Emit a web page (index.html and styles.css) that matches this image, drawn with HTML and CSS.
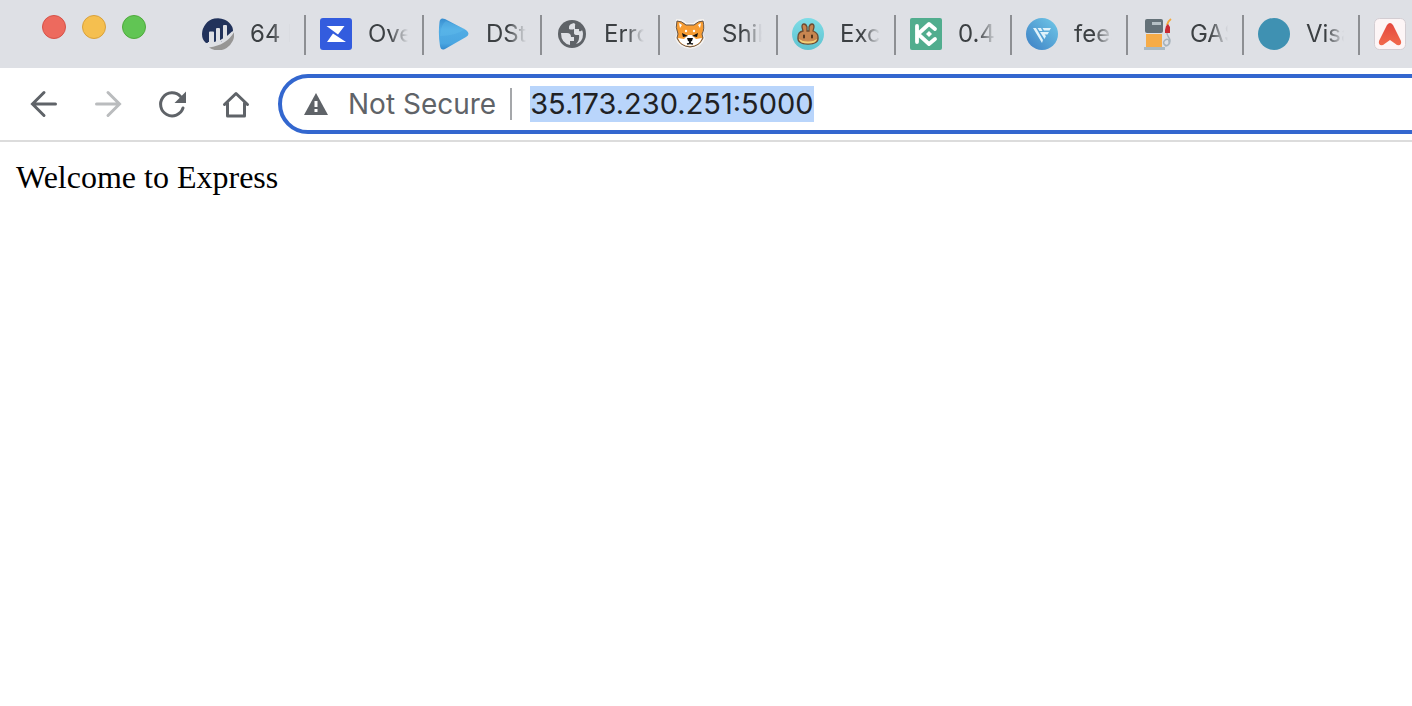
FILE: index.html
```html
<!DOCTYPE html>
<html lang="en">
<head>
<meta charset="utf-8">
<title>Welcome to Express</title>
<link rel="stylesheet" href="styles.css">
</head>
<body>
<header class="browser">
  <div class="tab-strip">
    <div class="window-controls">
      <button class="light close" aria-label="Close window"></button>
      <button class="light minimize" aria-label="Minimize window"></button>
      <button class="light zoom" aria-label="Zoom window"></button>
    </div>
    <nav class="tabs" aria-label="Open tabs">
      <button class="tab wide">
        <svg class="favicon" viewBox="0 0 32 32"><path fill="#21325b" d="M6 25H4Q0 22 0 16A16 16 0 0 1 30.300 9Q31 11 31 13Q27 19 20 22V24H6Z"/><path fill="#979695" d="M32 14A16 16 0 0 1 7 29.500Q25 27 32 14Z"/><path fill="#dee0e5" d="M7 14.500q0-1 1-1h3q1 0 1 1V25H7zM14 11q0-1 1-1h2q1 0 1 1v13h-4zM21 8q0-1 1-1h2q1 0 1 1v11l-4 3z"/><path d="M4 26Q20 26 31 14" fill="none" stroke="#dee0e5" stroke-width="2"/></svg>
        <span class="tab-title">64 E</span>
      </button>
      <button class="tab wide">
        <svg class="favicon" viewBox="0 0 32 32"><rect width="32" height="32" rx="3" fill="#335cde"/><path fill="#fff" d="M6.500 8H24.500L18 16.500zM7 24l6-8.500L26 24z"/></svg>
        <span class="tab-title">Over</span>
      </button>
      <button class="tab wide">
        <svg class="favicon" viewBox="0 0 32 32"><defs><linearGradient id="play" x1="0" y1="0" x2="0" y2="1"><stop offset="0" stop-color="#388ed0"/><stop offset=".35" stop-color="#51ade5"/><stop offset=".8" stop-color="#4aa6e1"/><stop offset="1" stop-color="#3489cc"/></linearGradient></defs><path fill="url(#play)" d="M1.500 4Q2-1 7 1L28 12Q33 16 28 19L7 31Q3 33 2 28Q0 16 1.500 4Z"/><path fill="#64c0ee" opacity=".35" d="M2 18Q18 18 27 11L8 3Q3 6 2 18Z"/></svg>
        <span class="tab-title">DSt</span>
      </button>
      <button class="tab wide">
        <svg class="favicon" viewBox="0 0 32 32"><circle cx="16" cy="16" r="14" fill="#5f6368"/><path fill="#dee0e5" d="M18 5q-5 1-5 4v2q3 1 5 0v4q0 2 3 2h2q1 5-3 9 7-2 7-10 0-2-1-4-1 2-3 1v-2h-4V8q1-2-1-3zM5 15h6q4 0 4 4h3v4h-4v4Q5 25 5 15z"/></svg>
        <span class="tab-title">Erro</span>
      </button>
      <button class="tab wide">
        <svg class="favicon" viewBox="0 0 32 32"><path d="M3 2q6 0 9 4h8q3-4 9-4q2 8-1 14l2 4q-3 9-14 10Q5 29 2 20l2-4Q1 9 3 2Z" fill="#f79c32" stroke="#f5f2ef" stroke-width="2"/><path d="M3 3q5 0 9 4h8q4-4 9-4q2 8-1 13l1 4q-3 8-13 9Q6 28 3 20l1-4Q1 9 3 3Z" fill="#f79c32" stroke="#62544a" stroke-width="1"/><path fill="#fff" d="M4 20l6 1 4-4h4l4 4 6-1q-3 8-12 8T4 20zM5 5l3 2-2 3zM27 5l-3 2 2 3z"/><circle cx="12" cy="13" r="1.200" fill="#fff"/><circle cx="20" cy="13" r="1.200" fill="#fff"/><path d="M8 15l6 3-5 1zM24 15l-6 3 5 1zM13 20h6l-1 3-2 1-2-1zM15 23h2v2h-2z" fill="#111"/><path d="M13 26q3-1 6 0" fill="none" stroke="#222" stroke-width="1.500"/></svg>
        <span class="tab-title">Shib</span>
      </button>
      <button class="tab wide">
        <svg class="favicon" viewBox="0 0 32 32"><defs><linearGradient id="teal" x1="0" y1="0" x2="0" y2="1"><stop offset="0" stop-color="#7edce6"/><stop offset="1" stop-color="#5ec3d0"/></linearGradient></defs><circle cx="16" cy="16" r="16" fill="url(#teal)"/><path d="M6 19q0-5 5-6l-1-4q0-3 2-3t3 3v4h2V9q1-3 3-3t2 3l-1 4q5 2 5 6q1 7-10 7T6 19Z" fill="#c78550" stroke="#6e4b31" stroke-width="1.300"/><path d="M7 21q9 4 18 0q-1 4.500-9 4.500t-9-4.500z" fill="#f2cf77"/><path d="M7 20q9 5 18 0q-2 3.500-9 3.500t-9-3.500z" fill="#c78550"/><path d="M12 17.500v2M20 17.500v2" stroke="#52351f" stroke-width="2" stroke-linecap="round"/></svg>
        <span class="tab-title">Exc</span>
      </button>
      <button class="tab">
        <svg class="favicon" viewBox="0 0 32 32"><rect width="32" height="32" rx="2" fill="#51ad8e"/><path d="M7 8v16M8 16L19 6l6 5M8 16l11 10 6-5" fill="none" stroke="#fff" stroke-width="3.800" stroke-linecap="round" stroke-linejoin="round"/><path fill="#fff" d="M19 13l3 3-3 3-3-3z"/></svg>
        <span class="tab-title">0.4</span>
      </button>
      <button class="tab">
        <svg class="favicon" viewBox="0 0 32 32"><defs><linearGradient id="sky" x1="1" y1="0" x2="0" y2="1"><stop offset="0" stop-color="#70c9e8"/><stop offset="1" stop-color="#3d7fc4"/></linearGradient></defs><circle cx="16" cy="16" r="16" fill="url(#sky)"/><path fill="#e0f2fa" d="M7 10h3l7 12-1 3zM11.500 10H15l1.500 3h-3zM16.500 10H25l-1.500 2.500H18zM14 14h9l-1.500 2.500h-3L20 18l-1.500 3z"/></svg>
        <span class="tab-title">fees</span>
      </button>
      <button class="tab">
        <svg class="favicon" viewBox="0 0 32 32"><path d="M25 14c-1 4 3 5 3 9s-4 6-6 3 4-7 5-3-2 5-4 5" fill="none" stroke="#a6b2bb" stroke-width="1.500"/><path d="M29 1q-3 2-4 6" fill="none" stroke="#f5a93c" stroke-width="2"/><path fill="#c92b32" d="M24 8l2-2 2 3v6h-5v-3z"/><rect x="3" y="1" width="18" height="14" rx="2" fill="#647178"/><path fill="#b5c0c5" d="M10 4h9v3h-9z"/><path fill="#f6ac48" d="M4 16h16v13H4z"/><path fill="#a9b9c3" d="M2 29h21v3H2z"/></svg>
        <span class="tab-title">GAS</span>
      </button>
      <button class="tab">
        <svg class="favicon" viewBox="0 0 32 32"><circle cx="16" cy="16" r="16" fill="#3f91b2"/></svg>
        <span class="tab-title">Visa</span>
      </button>
      <button class="tab" aria-label="Tab 11">
        <svg class="favicon" viewBox="0 0 32 32"><defs><linearGradient id="coral" x1="0" y1="0" x2="0" y2="1"><stop offset="0" stop-color="#e4473e"/><stop offset="1" stop-color="#f16a4c"/></linearGradient></defs><rect x=".5" y=".5" width="31" height="31" rx="5" fill="#fdf5f6" stroke="#d3cdd2"/><path fill="url(#coral)" d="M13 7q3-4 6 0l8 16q1 5-4 4l-7-5-7 5q-5 1-4-4z"/></svg>
      </button>
    </nav>
  </div>
  <div class="toolbar">
    <button class="nav-button" aria-label="Back"><svg class="nav-icon" viewBox="0 0 32 32"><path d="M27.500 16H5M16 4.500L4.500 16 16 27.500" fill="none" stroke="#5f6368" stroke-width="3" stroke-linecap="round" stroke-linejoin="miter"/></svg></button>
    <button class="nav-button" aria-label="Forward" disabled><svg class="nav-icon" viewBox="0 0 32 32"><path d="M4.500 16H27M16 4.500L27.500 16 16 27.500" fill="none" stroke="#babcbe" stroke-width="3" stroke-linecap="round"/></svg></button>
    <button class="nav-button" aria-label="Reload"><svg class="nav-icon" viewBox="0 0 32 32"><path d="M27 20A11.500 11.500 0 1 1 24.500 8.500" fill="none" stroke="#5f6368" stroke-width="3" stroke-linecap="round"/><path fill="#5f6368" d="M30 3.500V15H18.500z"/></svg></button>
    <button class="nav-button" aria-label="Home"><svg class="nav-icon" viewBox="0 0 32 32"><path d="M4.500 16.500L16 5.500l11.500 11M7.500 15v13h17V15" fill="none" stroke="#5f6368" stroke-width="3" stroke-linecap="round" stroke-linejoin="round"/></svg></button>
    <div class="omnibox">
      <svg class="warning" viewBox="0 0 24 22"><path fill="#5f6368" d="M12 0l12 22H0z"/><path fill="#fff" d="M10.500 8h3v6h-3zM10.500 16h3v3h-3z"/></svg>
      <label class="security" for="address">Not Secure</label>
      <input class="address" id="address" type="text" value="35.173.230.251:5000" spellcheck="false">
    </div>
  </div>
</header>
<main class="page">Welcome to Express</main>
</body>
</html>
```
FILE: styles.css
```css
* {
  box-sizing: border-box;
}

body {
  margin: 0;
  background: #fff;
  overflow-x: hidden;
}

button {
  padding: 0;
  border: 0;
  background: none;
  font: inherit;
  color: inherit;
}

.browser {
  font-family: Inter, "Liberation Sans", sans-serif;
  border-bottom: 2px solid #dcdcdc;
  overflow: hidden;
}

.tab-strip {
  display: flex;
  height: 68px;
  background: #dee0e5;
  overflow: hidden;
}

.window-controls {
  display: flex;
  flex: none;
  gap: 16px;
  width: 188px;
  padding: 15px 0 0 42px;
}

.light {
  width: 24px;
  height: 24px;
  border: 1px solid;
  border-radius: 50%;
}

.close {
  background: #ed6a5e;
  border-color: #d65248;
}

.minimize {
  background: #f5bf4f;
  border-color: #d9a13b;
}

.zoom {
  background: #61c554;
  border-color: #4faa3c;
}

.tabs {
  display: flex;
  padding-top: 15px;
}

.tab {
  display: flex;
  flex: none;
  align-items: center;
  gap: 16px;
  width: 116px;
  height: 40px;
  padding: 0 14px;
  border-right: 2px solid #8d8f93;
  color: #3c4043;
  font-size: 24px;
  line-height: 32px;
  text-align: left;
}

.tab.wide {
  width: 118px;
}

.favicon {
  flex: none;
  width: 32px;
  height: 32px;
  margin-bottom: 2px;
}

.tab-title {
  flex: 1;
  min-width: 0;
  margin-bottom: 2px;
  overflow: hidden;
  white-space: nowrap;
  -webkit-mask-image: linear-gradient(to left, transparent, #000 18px);
  mask-image: linear-gradient(to left, transparent, #000 18px);
}

.toolbar {
  display: flex;
  align-items: center;
  gap: 32px;
  padding: 6px 0 6px 28px;
}

.nav-button,
.nav-icon {
  display: block;
  flex: none;
  width: 32px;
  height: 32px;
}

.omnibox {
  display: flex;
  flex: 1;
  align-items: center;
  height: 60px;
  margin: 0 -40px 0 -6px;
  padding-left: 22px;
  border: 4px solid #3367cf;
  border-radius: 30px;
  font-size: 28px;
  line-height: 36px;
}

.warning {
  flex: none;
  width: 24px;
  height: 22px;
}

.security {
  flex: none;
  margin: 0 18px 0 20px;
  padding-right: 14px;
  border-right: 2px solid #a5a7aa;
  color: #5f6368;
  line-height: 32px;
}

.address {
  field-sizing: content;
  height: 36px;
  padding: 0;
  border: 0;
  outline: 0;
  background: #b9d5fb;
  color: #202124;
  font: inherit;
  font-size: 29px;
}

.page {
  padding: 16px;
  color: #000;
  font: 32px/38px "Liberation Serif", "Times New Roman", serif;
}
```
